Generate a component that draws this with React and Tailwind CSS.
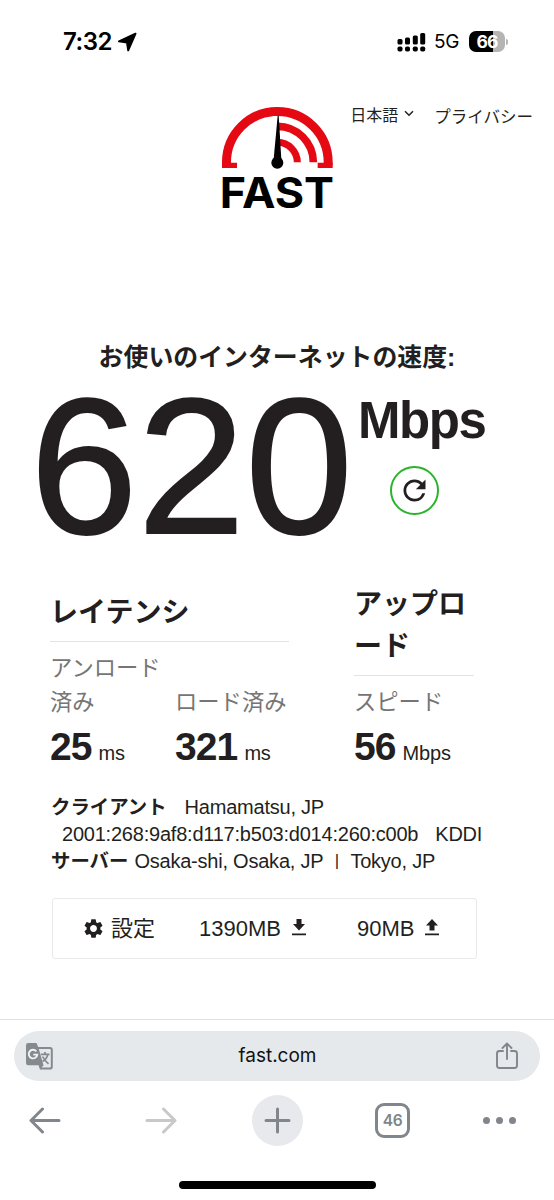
import React from 'react';
import { MdRefresh, MdSettings } from 'react-icons/md';

function StatusBar() {
  return (
    <header className="flex h-[83px] items-center justify-between pl-[63px] pr-[46px] font-[Inter,sans-serif] text-black">
      <div className="flex items-center gap-[5px]">
        <span className="text-[24px] font-semibold leading-none tracking-[-0.5px]">7:32</span>
        <svg width="20" height="20" viewBox="0 0 20 20" fill="#000" stroke="#000" strokeWidth="2" strokeLinejoin="round">
          <path d="M18.500 1.700L2 9.300L10 10.400L11.200 18.300Z" />
        </svg>
      </div>
      <div className="flex items-center">
        <svg width="29" height="20" viewBox="0 0 29 20">
          <g fill="#000">
            <rect x="0.5" y="7" width="5" height="5.5" rx="1.5" />
            <rect x="8" y="5.5" width="5" height="7" rx="1.5" />
            <rect x="15.8" y="3.5" width="5" height="9" rx="1.5" />
            <rect x="23.2" y="1" width="5" height="11.5" rx="1.5" />
            <rect x="0.5" y="14.5" width="5" height="5" rx="1.8" />
            <rect x="8" y="14.5" width="5" height="5" rx="1.8" />
            <rect x="15.8" y="14.5" width="5" height="5" rx="1.8" />
            <rect x="23.2" y="14.5" width="5" height="5" rx="1.8" />
          </g>
        </svg>
        <span className="ml-[8px] w-[27px] text-[19px] leading-none tracking-[-0.3px]">5G</span>
        <div className="ml-[8px] flex h-[21px] w-[36px] items-center justify-center rounded-[7px] bg-linear-to-r from-black from-67% to-[#b4b4b4] to-67% text-[17.5px] font-bold leading-none tracking-[-0.8px] text-white">
          66
        </div>
        <span className="ml-[1px] h-[6px] w-[2px] rounded-r-full bg-[#b4b4b4]" />
      </div>
    </header>
  );
}

function Logo() {
  return (
    <svg className="overflow-visible" width="111" height="103" viewBox="35 36 333 309">
      <g fill="none" stroke="#e50914">
        <path d="M48.5 211V202A152.5 152.5 0 0 1 353.5 202V211" strokeWidth="27" />
        <path d="M201 94A108 108 0 0 1 309 202" strokeWidth="23" />
        <path d="M201 142A60 60 0 0 1 261 202" strokeWidth="21" />
      </g>
      <path d="M35 203H80V219H35ZM322 203H367V219H322Z" fill="#e50914" />
      <path d="M187 63H203V190H187Z" fill="#fff" />
      <path d="M202 62L205 62L213 192H190Z" fill="#000" />
      <circle cx="201" cy="203" r="18" fill="#000" />
      <text
        x="28"
        y="339"
        textLength="343"
        lengthAdjust="spacingAndGlyphs"
        fontSize="127"
        className="fill-black font-[Inter,sans-serif] font-bold"
      >
        FAST
      </text>
    </svg>
  );
}

function TopNav() {
  return (
    <div className="flex h-[127px] items-start pl-[222px] pr-[21px] pt-[24px]">
      <Logo />
      <div className="flex flex-1 justify-end text-[16px] leading-5">
        <span className="-mt-[1px]">日本語</span>
        <svg className="ml-[6px] mr-[20px] mt-[3px]" width="10" height="7" viewBox="0 0 10 7" fill="none" stroke="#231f20" strokeWidth="1.5">
          <path d="M1 1.2L5 5.2L9 1.2" />
        </svg>
        <span className="whitespace-nowrap text-[16.5px]">プライバシー</span>
      </div>
    </div>
  );
}

function Speed() {
  return (
    <section className="pt-[132px]">
      <h1 className="text-center text-[24.9px] font-bold leading-[30px]">お使いのインターネットの速度:</h1>
      <div className="flex h-[200px] pl-[30px]">
        <div className="w-[328px] text-[193.5px] leading-[188px] [-webkit-text-stroke:1.8px_#231f20]">620</div>
        <div className="flex flex-col pt-[20px]">
          <span className="text-[51px] font-bold leading-[58px] tracking-[-1.4px]">Mbps</span>
          <button className="ml-[32px] mt-[16px] flex size-[49px] items-center justify-center rounded-full border-2 border-[#2bb32b]">
            <MdRefresh size={33} />
          </button>
        </div>
      </div>
    </section>
  );
}

function Metric({ label, value, unit, className }) {
  return (
    <div className={className}>
      <div className="text-[22.3px] leading-[34px] text-[#757575]">{label}</div>
      <div className="mt-[5px] whitespace-nowrap leading-[44px]">
        <span className="text-[39px] font-bold tracking-[-0.9px]">{value}</span>
        <span className="ml-[7px] text-[20px] tracking-[-0.2px]">{unit}</span>
      </div>
    </div>
  );
}

function Results() {
  return (
    <section className="flex h-[208px] items-end justify-between pb-[3px] pl-[50px] pr-[80px]">
      <div className="w-[239px]">
        <h2 className="border-b border-[#e3e3e3] pb-[7px] text-[28px] font-bold leading-[42px]">レイテンシ</h2>
        <div className="flex items-end pt-[10px]">
          <Metric className="w-[125px]" label={<>アンロード<br />済み</>} value="25" unit="ms" />
          <Metric label="ロード済み" value="321" unit="ms" />
        </div>
      </div>
      <div className="w-[120px]">
        <h2 className="border-b border-[#e3e3e3] pb-[7px] text-[28px] font-bold leading-[42px]">アップロ<br />ード</h2>
        <div className="pt-[10px]">
          <Metric label="スピード" value="56" unit="Mbps" />
        </div>
      </div>
    </section>
  );
}

function ConnectionInfo() {
  return (
    <section className="whitespace-nowrap pl-[51px] pt-[14px] text-[20px] leading-[27px] tracking-[-0.22px]">
      <div>
        <b className="text-[19.4px] tracking-normal">クライアント</b>
        <span className="ml-[18px]">Hamamatsu, JP</span>
      </div>
      <div className="pl-[11px]">
        <span>2001:268:9af8:d117:b503:d014:260:c00b</span>
        <span className="ml-[17px]">KDDI</span>
      </div>
      <div>
        <b className="text-[19.4px] tracking-normal">サーバー</b>
        <span className="ml-[6px]">Osaka-shi, Osaka, JP</span>
        <span className="relative -top-[2px] mx-[11px] inline-block w-[5px] text-center text-[17px] leading-none">|</span>
        <span>Tokyo, JP</span>
      </div>
    </section>
  );
}

function UsageBox() {
  return (
    <section className="ml-[52px] mt-[23px] flex h-[61px] w-[425px] items-center rounded-[3px] border-[1.5px] border-[#e9e9e9] pl-[29px] text-[22px]">
      <MdSettings size={23} />
      <span className="ml-[6px] w-[88px]">設定</span>
      <span>1390MB</span>
      <svg className="ml-[11px] -mt-[3px]" width="14" height="17" viewBox="0 0 14 17" fill="currentColor">
        <path d="M4.5 0H9.5V5H13L7 11.5L1 5H4.5ZM0 14.5H14V16.3H0Z" />
      </svg>
      <span className="ml-[51px]">90MB</span>
      <svg className="ml-[11px] -mt-[3px]" width="14" height="17" viewBox="0 0 14 17" fill="currentColor">
        <path d="M4.5 11.5H9.5V6.5H13L7 0L1 6.5H4.5ZM0 14.5H14V16.3H0Z" />
      </svg>
    </section>
  );
}

function TranslateIcon() {
  return (
    <svg width="27" height="27" viewBox="0 0 27 27" fill="none">
      <path d="M12 5H24Q25.800 5 25.800 6.800V23.700Q25.800 25.500 24 25.500H14" stroke="#848a8e" strokeWidth="2" />
      <path d="M2.300 0H10.500L12.300 4.200L17.500 22.300L14 26.500L12.500 22.300H2.300Q0 22.300 0 20V2.300Q0 0 2.300 0Z" fill="#848a8e" />
      <path d="M10.300 8.300A4.300 4.300 0 1 0 11.300 11.600H7.300" stroke="#f1f3f4" strokeWidth="1.9" />
      <path d="M14.800 11.300H23.500M19 9V11.300M21.800 11.500Q20.800 16 16.500 18.500M16.600 13.500Q18.500 17.500 22.500 20.800" stroke="#848a8e" strokeWidth="1.7" />
    </svg>
  );
}

function BrowserBar() {
  return (
    <footer className="mt-auto h-[181px] border-t border-[#e0e1e3] pt-[11px] font-[Inter,sans-serif] text-[#80868b]">
      <div className="mx-[14px] flex h-[50px] items-center justify-between rounded-full bg-[#e6e9ec] pl-[12px] pr-[21px]">
        <TranslateIcon />
        <span className="ml-[7px] text-[19px] text-[#111]">fast.com</span>
        <svg width="24" height="28" viewBox="0 0 24 28" fill="none" stroke="currentColor" strokeWidth="1.9" strokeLinecap="round" strokeLinejoin="round">
          <path d="M8 9H4.500Q2 9 2 11.500V23.500Q2 26 4.500 26H19.500Q22 26 22 23.500V11.500Q22 9 19.500 9H16M12 17V1.500M7.500 6L12 1.500L16.500 6" />
        </svg>
      </div>
      <nav className="mt-[14px] flex h-[51px] items-center pl-[29px]">
        <svg width="32" height="27" viewBox="0 0 32 27" fill="none" stroke="currentColor" strokeWidth="3" strokeLinecap="round" strokeLinejoin="round">
          <path d="M30 13.500H2M13.500 2L2 13.500L13.500 25" />
        </svg>
        <svg className="ml-[84px]" width="32" height="27" viewBox="0 0 32 27" fill="none" stroke="#c8c8c8" strokeWidth="3" strokeLinecap="round" strokeLinejoin="round">
          <path d="M2 13.500H30M18.500 2L30 13.500L18.500 25" />
        </svg>
        <button className="ml-[75px] flex size-[51px] items-center justify-center rounded-full bg-[#e8e9ed]">
          <svg width="27" height="27" viewBox="0 0 27 27" fill="none" stroke="currentColor" strokeWidth="3" strokeLinecap="round">
            <path d="M13.500 2V25M2 13.500H25" />
          </svg>
        </button>
        <div className="ml-[72px] flex size-[35px] items-center justify-center rounded-[9px] border-[3px] border-current text-[15.5px] font-semibold tracking-[-0.4px]">46</div>
        <div className="ml-[73px] flex gap-[6px]">
          <span className="size-[7px] rounded-full bg-current" />
          <span className="size-[7px] rounded-full bg-current" />
          <span className="size-[7px] rounded-full bg-current" />
        </div>
      </nav>
      <div className="mx-auto mt-[35px] h-[8px] w-[197px] rounded-full bg-black" />
    </footer>
  );
}

export default function App() {
  return (
    <div className="flex h-[1200px] w-[554px] flex-col overflow-hidden bg-white font-['Liberation_Sans','Noto_Sans_CJK_JP',sans-serif] text-[#231f20]">
      <StatusBar />
      <main>
        <TopNav />
        <Speed />
        <Results />
        <ConnectionInfo />
        <UsageBox />
      </main>
      <BrowserBar />
    </div>
  );
}
